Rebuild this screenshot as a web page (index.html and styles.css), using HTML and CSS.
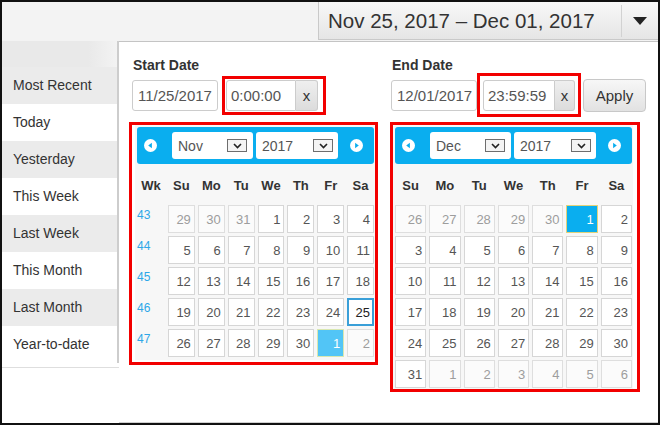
FILE: index.html
```html
<!DOCTYPE html>
<html lang="en">
<head>
    <meta charset="UTF-8">
    <meta name="viewport" content="width=device-width, initial-scale=1.0">
    <title>Date Range Picker</title>
    <link rel="stylesheet" href="styles.css">
</head>
<body>
    <div class="frame">
        <div class="topbar">
            <div class="range-btn">
                <span class="range-text">Nov 25, 2017 – Dec 01, 2017</span>
                <span class="range-caret">
                    <svg width="14" height="8" viewBox="0 0 14 8"><polygon points="0,0 14,0 7,8" fill="#222"/></svg>
                </span>
            </div>
        </div>

        <div class="main">
            <div class="presets">
                <div class="presets-top"></div>
                <ul class="preset-list">
                    <li class="alt">Most Recent</li>
                    <li>Today</li>
                    <li class="alt">Yesterday</li>
                    <li>This Week</li>
                    <li class="alt">Last Week</li>
                    <li>This Month</li>
                    <li class="alt">Last Month</li>
                    <li>Year-to-date</li>
                </ul>
                <div class="presets-foot"></div>
            </div>

            <div class="panel">
                <!-- Start date column -->
                <div class="col col-start">
                    <div class="field-label">Start Date</div>
                    <div class="field-row">
                        <input class="date-input" type="text" value="11/25/2017" readonly>
                        <div class="mark mark-start">
                            <input class="time-input" type="text" value="0:00:00" readonly>
                            <button class="clear-btn">x</button>
                        </div>
                    </div>
                    <div class="cal-mark cal-mark-start">
                        <div class="cal">
                            <div class="cal-head">
                                <span class="cal-prev">
                                    <svg width="13" height="13" viewBox="0 0 13 13"><circle cx="6.5" cy="6.5" r="6.5" fill="#fff"/><polygon points="7.9,3.7 4.2,6.5 7.9,9.3" fill="#0aaeef"/></svg>
                                </span>
                                <span class="sel sel-month">Nov
                                    <span class="sel-arrow"><svg width="9" height="6" viewBox="0 0 9 6"><polyline points="1,1 4.5,4.5 8,1" fill="none" stroke="#222" stroke-width="1.6"/></svg></span>
                                </span>
                                <span class="sel sel-year">2017
                                    <span class="sel-arrow"><svg width="9" height="6" viewBox="0 0 9 6"><polyline points="1,1 4.5,4.5 8,1" fill="none" stroke="#222" stroke-width="1.6"/></svg></span>
                                </span>
                                <span class="cal-next">
                                    <svg width="13" height="13" viewBox="0 0 13 13"><circle cx="6.5" cy="6.5" r="6.5" fill="#fff"/><polygon points="5.1,3.7 8.8,6.5 5.1,9.3" fill="#0aaeef"/></svg>
                                </span>
                            </div>
                            <div id="start-grid" class="cal-grid with-weeks"></div>
                        </div>
                    </div>
                </div>

                <!-- End date column -->
                <div class="col col-end">
                    <div class="field-label">End Date</div>
                    <div class="field-row">
                        <input class="date-input" type="text" value="12/01/2017" readonly>
                        <div class="mark mark-end">
                            <input class="time-input time-input-wide" type="text" value="23:59:59" readonly>
                            <button class="clear-btn clear-btn-narrow">x</button>
                        </div>
                        <button class="apply-btn">Apply</button>
                    </div>
                    <div class="cal-mark cal-mark-end">
                        <div class="cal cal-end">
                            <div class="cal-head">
                                <span class="cal-prev">
                                    <svg width="13" height="13" viewBox="0 0 13 13"><circle cx="6.5" cy="6.5" r="6.5" fill="#fff"/><polygon points="7.9,3.7 4.2,6.5 7.9,9.3" fill="#0aaeef"/></svg>
                                </span>
                                <span class="sel sel-month">Dec
                                    <span class="sel-arrow"><svg width="9" height="6" viewBox="0 0 9 6"><polyline points="1,1 4.5,4.5 8,1" fill="none" stroke="#222" stroke-width="1.6"/></svg></span>
                                </span>
                                <span class="sel sel-year">2017
                                    <span class="sel-arrow"><svg width="9" height="6" viewBox="0 0 9 6"><polyline points="1,1 4.5,4.5 8,1" fill="none" stroke="#222" stroke-width="1.6"/></svg></span>
                                </span>
                                <span class="cal-next">
                                    <svg width="13" height="13" viewBox="0 0 13 13"><circle cx="6.5" cy="6.5" r="6.5" fill="#fff"/><polygon points="5.1,3.7 8.8,6.5 5.1,9.3" fill="#0aaeef"/></svg>
                                </span>
                            </div>
                            <div id="end-grid" class="cal-grid"></div>
                        </div>
                    </div>
                </div>
            </div>
        </div>
    </div>

    <script>
        const dayNames = ['Su', 'Mo', 'Tu', 'We', 'Th', 'Fr', 'Sa'];

        function addCell(grid, cls, text) {
            const cell = document.createElement('div');
            cell.className = cls;
            cell.textContent = text;
            grid.appendChild(cell);
        }

        // Build one month grid, starting on the Sunday before the 1st
        function renderCalendar(gridId, year, month, opts) {
            const grid = document.getElementById(gridId);
            if (opts.weeks) addCell(grid, 'dow', 'Wk');
            dayNames.forEach(name => addCell(grid, 'dow', name));

            const offset = new Date(year, month, 1).getDay();
            const count = new Date(year, month + 1, 0).getDate();
            const rows = Math.ceil((offset + count) / 7);

            for (let r = 0; r < rows; r++) {
                if (opts.weeks) addCell(grid, 'wk', opts.firstWeek + r);
                for (let c = 0; c < 7; c++) {
                    const d = new Date(year, month, 1 - offset + r * 7 + c);
                    let cls = 'day';
                    if (d.getMonth() !== month) cls += ' other';
                    const key = (d.getMonth() + 1) + '/' + d.getDate();
                    if (opts.marks[key]) cls += ' ' + opts.marks[key];
                    addCell(grid, cls, d.getDate());
                }
            }
        }

        renderCalendar('start-grid', 2017, 10, {
            weeks: true,
            firstWeek: 43,
            marks: { '11/25': 'picked', '12/1': 'range-end' }
        });
        renderCalendar('end-grid', 2017, 11, {
            weeks: false,
            marks: { '12/1': 'current' }
        });
    </script>
</body>
</html>
```

FILE: styles.css
```css
body {
    margin: 0;
    font-family: "Liberation Sans", Arial, sans-serif;
    background-color: #fff;
}
.frame {
    width: 656px;
    height: 421px;
    border: 2px solid #111;
    overflow: hidden;
    background-color: #fff;
}

/* top range button */
.topbar {
    height: 39px;
    background-color: #f3f3f3;
    display: flex;
    justify-content: flex-end;
}
.range-btn {
    box-sizing: border-box;
    width: 340px;
    height: 38px;
    display: flex;
    align-items: center;
    padding-left: 9px;
    border-left: 1px solid #c9c9c9;
    border-bottom: 1px solid #c9c9c9;
    background: linear-gradient(#f8f8f8, #e5e5e5);
}
.range-text {
    flex: 1;
    font-size: 20.5px;
    color: #333;
}
.range-caret {
    width: 36px;
    height: 32px;
    display: flex;
    align-items: center;
    justify-content: center;
    border-left: 1px solid #d2d2d2;
}

.main {
    display: flex;
    height: 382px;
}

/* preset list */
.presets {
    width: 117px;
    display: flex;
    flex-direction: column;
}
.presets-top {
    height: 26px;
    box-sizing: border-box;
    border-right: 2px solid #cdcdcd;
    background: linear-gradient(to right, #e9e9e9 75%, #f3f3f3);
}
.preset-list {
    list-style-type: none;
    margin: 0;
    padding: 0;
    box-sizing: border-box;
    border-right: 2px solid #cdcdcd;
}
.preset-list li {
    height: 37px;
    line-height: 37px;
    padding-left: 11px;
    font-size: 14px;
    color: #333;
    background-color: #fff;
}
.preset-list li.alt {
    background-color: #ebebeb;
}
.presets-foot {
    flex: 1;
    margin-top: 4px;
    border-top: 1px solid #dedede;
}

/* main panel */
.panel {
    flex: 1;
    display: flex;
    padding: 15px 0 0 10px;
    border-top: 1px solid #c4c4c4;
    border-bottom: 1px solid #cfcfcf;
    background-color: #fff;
}
.col {
    display: flex;
    flex-direction: column;
}
.col-start {
    width: 249px;
}
.col-end {
    margin-left: 12px;
}
.field-label {
    font-size: 14px;
    font-weight: bold;
    line-height: 17px;
    color: #333;
}
.col-start .field-label {
    margin-left: 4px;
}
.col-end .field-label {
    margin-left: 2px;
}
.field-row {
    height: 42px;
    display: flex;
    align-items: center;
}
.date-input, .time-input {
    box-sizing: border-box;
    height: 31px;
    padding: 0 3px 0 5px;
    font-family: "Liberation Sans", Arial, sans-serif;
    font-size: 15px;
    color: #555;
    border: 1px solid #ccc;
    border-radius: 3px;
    background-color: #fff;
    outline: none;
}
.date-input {
    width: 86px;
}
.col-start .date-input {
    margin-left: 3px;
}
.col-end .date-input {
    margin-left: 1px;
}
.time-input {
    width: 70px;
    padding-left: 4px;
    border-radius: 3px 0 0 3px;
}
.time-input-wide {
    width: 72px;
}
.clear-btn {
    box-sizing: border-box;
    width: 22px;
    height: 31px;
    padding: 0;
    font-family: "Liberation Sans", Arial, sans-serif;
    font-size: 15px;
    color: #333;
    border: 1px solid #ccc;
    border-left: none;
    border-radius: 0 3px 3px 0;
    background: linear-gradient(#efefef, #dcdcdc);
}
.clear-btn-narrow {
    width: 20px;
}
.apply-btn {
    box-sizing: border-box;
    width: 63px;
    height: 33px;
    margin-left: 2px;
    font-family: "Liberation Sans", Arial, sans-serif;
    font-size: 15px;
    color: #333;
    border: 1px solid #c8c8c8;
    border-radius: 4px;
    background: linear-gradient(#f7f7f7, #e2e2e2);
}

/* red highlight frames */
.mark {
    display: flex;
    border: 3px solid #f20000;
}
.mark-start {
    margin-left: 4px;
    padding: 1px 5px 1px 1px;
}
.mark-end {
    padding: 4px 3px 3px 3px;
}
.cal-mark {
    align-self: flex-start;
    margin-top: 6px;
    border: 3px solid #f20000;
}
.cal-mark-start {
    padding: 0 0 2px 3px;
}
.cal-mark-end {
    padding: 0 4px 0 0;
}

/* calendar */
.cal {
    background-color: #f7f7f7;
    padding: 2px 1px 3px 2px;
}
.cal-end {
    padding-bottom: 1px;
}
.cal-head {
    width: 237px;
    height: 37px;
    display: flex;
    align-items: center;
    background-color: #0aaeef;
    border-radius: 3px;
}
.cal-prev {
    width: 26px;
    display: flex;
    justify-content: center;
}
.cal-next {
    flex: 1;
    display: flex;
    justify-content: center;
}
.sel {
    box-sizing: border-box;
    height: 27px;
    display: flex;
    align-items: center;
    justify-content: space-between;
    padding: 0 6px;
    font-size: 14px;
    color: #555;
    background-color: #fff;
    border-radius: 3px;
}
.sel-month {
    width: 81px;
    margin-left: 9px;
}
.sel-year {
    width: 82px;
    margin-left: 3px;
    padding-right: 5px;
}
.sel-arrow {
    box-sizing: border-box;
    width: 20px;
    height: 13px;
    display: flex;
    align-items: center;
    justify-content: center;
    border: 1px solid #6e6e6e;
    background-color: #f4f4f4;
}
.cal-grid {
    width: 237px;
    margin-top: 5px;
    display: grid;
    grid-template-columns: repeat(7, 1fr);
    grid-template-rows: 33px;
    grid-auto-rows: 28px;
    gap: 3px;
}
.cal-grid.with-weeks {
    grid-template-columns: 28px repeat(7, 1fr);
}
.dow {
    display: flex;
    align-items: center;
    justify-content: center;
    font-size: 13px;
    font-weight: bold;
    color: #333;
}
.wk {
    padding-top: 3px;
    font-size: 12px;
    color: #2ea7e8;
}
.day {
    box-sizing: border-box;
    display: flex;
    align-items: center;
    justify-content: flex-end;
    padding-right: 3px;
    font-size: 13px;
    color: #555;
    background-color: #fff;
    border: 1px solid #d6d6d6;
}
.day.other {
    color: #9d9d9d;
    background-color: #fbfbfb;
    border-color: #dedede;
}
.day.picked {
    color: #222;
    border: 2px solid #3a9fd8;
    padding-right: 2px;
}
.day.range-end {
    color: #fff;
    background-color: #52c5f6;
    border-color: #d9e7b0;
}
.day.current {
    color: #fff;
    background-color: #0aaeef;
    border-color: #e2d27a;
}
```
